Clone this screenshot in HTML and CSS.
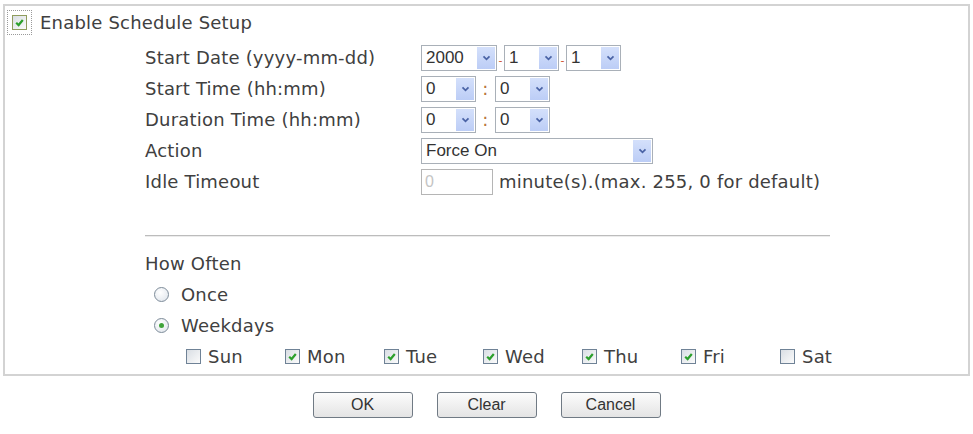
FILE: index.html
```html
<!DOCTYPE html>
<html lang="en">
<head>
    <meta charset="UTF-8">
    <title>Schedule Setup</title>
    <link rel="stylesheet" href="styles.css">
</head>
<body>
    <div class="schedule-box">
        <label class="enable-row">
            <span class="check checked focused">
                <svg viewBox="0 0 10 10"><path d="M2 5.2 L4.2 7.3 L8 2.8" /></svg>
            </span>
            Enable Schedule Setup
        </label>

        <div class="schedule-body">
            <div class="field-row">
                <div class="field-label">Start Date (yyyy-mm-dd)</div>
                <div class="field-control">
                    <span class="dropdown w-year"><span class="dropdown-value">2000</span><span class="dropdown-btn"><svg viewBox="0 0 10 7"><path d="M1.5 1.5 L5 5 L8.5 1.5" /></svg></span></span>
                    <span class="dash">-</span>
                    <span class="dropdown w-small"><span class="dropdown-value">1</span><span class="dropdown-btn"><svg viewBox="0 0 10 7"><path d="M1.5 1.5 L5 5 L8.5 1.5" /></svg></span></span>
                    <span class="dash">-</span>
                    <span class="dropdown w-small"><span class="dropdown-value">1</span><span class="dropdown-btn"><svg viewBox="0 0 10 7"><path d="M1.5 1.5 L5 5 L8.5 1.5" /></svg></span></span>
                </div>
            </div>
            <div class="field-row">
                <div class="field-label">Start Time (hh:mm)</div>
                <div class="field-control">
                    <span class="dropdown w-small"><span class="dropdown-value">0</span><span class="dropdown-btn"><svg viewBox="0 0 10 7"><path d="M1.5 1.5 L5 5 L8.5 1.5" /></svg></span></span>
                    <span class="colon">:</span>
                    <span class="dropdown w-small"><span class="dropdown-value">0</span><span class="dropdown-btn"><svg viewBox="0 0 10 7"><path d="M1.5 1.5 L5 5 L8.5 1.5" /></svg></span></span>
                </div>
            </div>
            <div class="field-row">
                <div class="field-label">Duration Time (hh:mm)</div>
                <div class="field-control">
                    <span class="dropdown w-small"><span class="dropdown-value">0</span><span class="dropdown-btn"><svg viewBox="0 0 10 7"><path d="M1.5 1.5 L5 5 L8.5 1.5" /></svg></span></span>
                    <span class="colon">:</span>
                    <span class="dropdown w-small"><span class="dropdown-value">0</span><span class="dropdown-btn"><svg viewBox="0 0 10 7"><path d="M1.5 1.5 L5 5 L8.5 1.5" /></svg></span></span>
                </div>
            </div>
            <div class="field-row">
                <div class="field-label">Action</div>
                <div class="field-control">
                    <span class="dropdown w-wide"><span class="dropdown-value">Force On</span><span class="dropdown-btn"><svg viewBox="0 0 10 7"><path d="M1.5 1.5 L5 5 L8.5 1.5" /></svg></span></span>
                </div>
            </div>
            <div class="field-row">
                <div class="field-label">Idle Timeout</div>
                <div class="field-control">
                    <input class="text-input" type="text" value="0" disabled>
                    <span class="hint">minute(s).(max. 255, 0 for default)</span>
                </div>
            </div>

            <hr class="divider">

            <div class="often-title">How Often</div>
            <label class="radio-row"><span class="radio"></span>Once</label>
            <label class="radio-row"><span class="radio selected"></span>Weekdays</label>

            <div class="day-list">
                <label class="day"><span class="check"></span>Sun</label>
                <label class="day"><span class="check checked"><svg viewBox="0 0 10 10"><path d="M2 5.2 L4.2 7.3 L8 2.8" /></svg></span>Mon</label>
                <label class="day"><span class="check checked"><svg viewBox="0 0 10 10"><path d="M2 5.2 L4.2 7.3 L8 2.8" /></svg></span>Tue</label>
                <label class="day"><span class="check checked"><svg viewBox="0 0 10 10"><path d="M2 5.2 L4.2 7.3 L8 2.8" /></svg></span>Wed</label>
                <label class="day"><span class="check checked"><svg viewBox="0 0 10 10"><path d="M2 5.2 L4.2 7.3 L8 2.8" /></svg></span>Thu</label>
                <label class="day"><span class="check checked"><svg viewBox="0 0 10 10"><path d="M2 5.2 L4.2 7.3 L8 2.8" /></svg></span>Fri</label>
                <label class="day"><span class="check"></span>Sat</label>
            </div>
        </div>
    </div>

    <div class="button-bar">
        <button class="form-button">OK</button>
        <button class="form-button">Clear</button>
        <button class="form-button">Cancel</button>
    </div>
</body>
</html>
```

FILE: styles.css
```css
body {
    margin: 0;
    padding: 4px 3px 0;
    background: #fff;
    font-family: "DejaVu Sans", Verdana, sans-serif;
    font-size: 18px;
    letter-spacing: 0.2px;
    color: #404040;
}

.schedule-box {
    border: 2px solid #d3d3d3;
    padding: 3px 0 2px 7px;
}

.enable-row {
    display: flex;
    align-items: center;
    gap: 13px;
    height: 26px;
}

.schedule-body {
    padding-left: 133px;
    margin-top: 7px;
}

.field-row {
    display: grid;
    grid-template-columns: 276px auto;
    align-items: center;
    height: 31px;
}

.field-control {
    display: flex;
    align-items: center;
}

/* xp style drop-down boxes */
.dropdown {
    display: inline-flex;
    align-items: stretch;
    height: 26px;
    box-sizing: border-box;
    border: 1px solid #a9b0b8;
    background: #fff;
    padding: 1px;
    font-family: "Liberation Sans", Arial, sans-serif;
    font-size: 17px;
    letter-spacing: 0;
    color: #333;
}

.dropdown-value {
    flex: 1;
    display: flex;
    align-items: center;
    padding-left: 3px;
}

.dropdown-btn {
    width: 18px;
    display: flex;
    align-items: center;
    justify-content: center;
    background: linear-gradient(#d4e0fb, #bccdf6);
}

.dropdown-btn svg {
    width: 9px;
    height: 6px;
    fill: none;
    stroke: #4a63a5;
    stroke-width: 2;
}

.w-year {
    width: 76px;
}

.w-small {
    width: 55px;
}

.w-wide {
    width: 232px;
}

.dash {
    width: 7px;
    text-align: center;
    font-size: 11px;
    color: #d0502e;
    align-self: flex-end;
    margin-bottom: 4px;
}

.colon {
    width: 19px;
    text-align: center;
    color: #b8743a;
}

.text-input {
    width: 72px;
    height: 26px;
    box-sizing: border-box;
    border: 1px solid #b5b5b5;
    background: #fff;
    padding: 0 3px;
    font-family: "Liberation Sans", Arial, sans-serif;
    font-size: 16px;
    color: #c4c4c4;
}

.hint {
    margin-left: 6px;
}

.divider {
    width: 685px;
    margin: 38px 0 0;
    border: 0;
    border-top: 1px solid #bcbcbc;
    border-bottom: 1px solid #ececec;
}

.often-title {
    margin-top: 11px;
    height: 31px;
    line-height: 31px;
}

.radio-row {
    display: flex;
    align-items: center;
    gap: 12px;
    height: 31px;
    padding-left: 9px;
}

.radio {
    width: 13px;
    height: 13px;
    border-radius: 50%;
    border: 1px solid #7d8b99;
    background: radial-gradient(circle at 40% 35%, #fff, #dde3ea);
    position: relative;
}

.radio.selected::after {
    content: '';
    position: absolute;
    left: 4px;
    top: 4px;
    width: 5px;
    height: 5px;
    border-radius: 50%;
    background: #3fa33a;
}

.day-list {
    display: flex;
    height: 31px;
    padding-left: 41px;
}

.day {
    width: 99px;
    display: flex;
    align-items: center;
    gap: 7px;
}

/* checkboxes */
.check {
    width: 13px;
    height: 13px;
    flex: none;
    border: 1px solid #6f8296;
    background: linear-gradient(135deg, #d9dee4, #fbfbfb);
    display: flex;
    align-items: center;
    justify-content: center;
}

.check svg {
    width: 11px;
    height: 11px;
    fill: none;
    stroke: #2ca02c;
    stroke-width: 2;
}

.check.focused {
    border-color: #8f9c5d;
    outline: 1px dotted #9a9a9a;
    outline-offset: 4px;
}

.button-bar {
    display: flex;
    justify-content: center;
    gap: 24px;
    margin-top: 16px;
}

.form-button {
    width: 100px;
    height: 26px;
    border: 1px solid #707a84;
    border-radius: 3px;
    background: linear-gradient(#fcfcfc, #e4e4e4);
    font-family: "Liberation Sans", Arial, sans-serif;
    font-size: 16px;
    color: #333;
    padding: 0;
}
```
